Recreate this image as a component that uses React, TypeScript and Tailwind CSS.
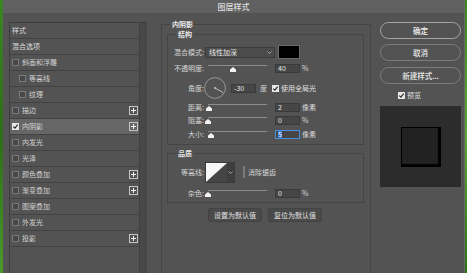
import React from "react";

/* Photoshop "图层样式" dialog — inner shadow page */

type Row = {
  label: string;
  head?: boolean;
  indent?: boolean;
  plus?: boolean;
  on?: boolean;
};

const ROWS: Row[] = [
  { label: "样式", head: true },
  { label: "混合选项", head: true },
  { label: "斜面和浮雕" },
  { label: "等高线", indent: true },
  { label: "纹理", indent: true },
  { label: "描边", plus: true },
  { label: "内阴影", plus: true, on: true },
  { label: "内发光" },
  { label: "光泽" },
  { label: "颜色叠加", plus: true },
  { label: "渐变叠加", plus: true },
  { label: "图案叠加" },
  { label: "外发光" },
  { label: "投影", plus: true },
];

function Check({ on = false }: { on?: boolean }) {
  if (on) {
    return (
      <span className="flex h-[7px] w-[7px] shrink-0 items-center justify-center bg-[#e8e8e8]">
        <svg width="7" height="7" viewBox="0 0 7 7">
          <path d="M1.3 3.6 L2.9 5.1 L5.7 1.6" fill="none" stroke="#2a2a2a" strokeWidth="1.2" />
        </svg>
      </span>
    );
  }
  return <span className="h-[7px] w-[7px] shrink-0 border border-[#7a7a7a] bg-[#474747]" />;
}

function PlusBox() {
  return (
    <span className="ml-auto mr-[1px] flex h-[9px] w-[9px] items-center justify-center border border-[#c4c4c4]">
      <svg width="5" height="5" viewBox="0 0 5 5">
        <path d="M2.5 0 V5 M0 2.5 H5" stroke="#f0f0f0" strokeWidth="1" />
      </svg>
    </span>
  );
}

function StyleList() {
  return (
    <div className="ml-[6px] mt-[9px] flex w-[138px] shrink-0 border-l border-t border-[#3e3e3e]">
      <div className="w-[130px] border-r border-[#3e3e3e]">
        {ROWS.map((r) => (
          <div
            key={r.label}
            className={
              "flex h-[16px] items-center border-b border-[#424242] " +
              (r.on ? "bg-[#666666] " : "") +
              (r.head ? "pl-[2px]" : r.indent ? "pl-[9px]" : "pl-[2px]")
            }
          >
            {!r.head && <Check on={r.on} />}
            <span className={r.head ? "text-[#dadada]" : "ml-[3px] text-[#d2d2d2]"}>{r.label}</span>
            {r.plus && <PlusBox />}
          </div>
        ))}
      </div>
      <div className="w-[7px] bg-[#484848]" />
    </div>
  );
}

function Label({ children }: { children: React.ReactNode }) {
  return <div className="w-[36px] shrink-0 text-right text-[#d6d6d6]">{children}</div>;
}

function NumBox({ value, focus = false }: { value: string; focus?: boolean }) {
  return (
    <div
      className={
        "ml-[8px] flex h-[9px] w-[25px] shrink-0 items-center pl-[2px] text-[#e8e8e8] " +
        (focus ? "border border-[#4a8ee0] bg-[#464646]" : "border border-[#3a3a3a] bg-[#464646]")
      }
    >
      {focus ? <span className="bg-[#3a76d0] text-white">{value}</span> : value}
    </div>
  );
}

function Thumb({ left }: { left: number }) {
  return (
    <svg
      className="absolute top-[4px]"
      style={{ left }}
      width="6"
      height="5"
      viewBox="0 0 6 5"
    >
      <path d="M3 0 L6 2.6 V5 H0 V2.6 Z" fill="#f2f2f2" />
    </svg>
  );
}

function Slider({ at }: { at: number }) {
  return (
    <div className="relative ml-[4px] h-full w-[59px] shrink-0">
      <div className="mt-[2px] h-[1px] bg-[#8c8c8c]" />
      <Thumb left={at - 3} />
    </div>
  );
}

function Chevron() {
  return (
    <svg width="5" height="3" viewBox="0 0 5 3">
      <path d="M0.5 0.5 L2.5 2.5 L4.5 0.5" fill="none" stroke="#bcbcbc" strokeWidth="0.8" />
    </svg>
  );
}

function SliderRow({
  label,
  at,
  value,
  unit,
  focus,
  className = "",
}: {
  label: string;
  at: number;
  value: string;
  unit: string;
  focus?: boolean;
  className?: string;
}) {
  return (
    <div className={"flex h-[10px] items-center " + className}>
      <Label>{label}</Label>
      <Slider at={at} />
      <NumBox value={value} focus={focus} />
      <span className="ml-[2px] text-[#d6d6d6]">{unit}</span>
    </div>
  );
}

function Options() {
  return (
    <fieldset className="ml-[14px] mt-[7px] h-[270px] w-[210px] shrink-0 border border-[#454545] p-0">
      <legend className="ml-[8px] px-[2px] text-[7px] font-semibold leading-[9px] text-[#ececec]">内阴影</legend>
      <div className="px-[5px] pt-[1px]">
        {/* 结构 */}
        <fieldset className="w-[197px] border border-[#454545] p-0 pb-[5px]">
          <legend className="ml-[8px] px-[2px] font-semibold leading-[9px] text-[#e6e6e6]">结构</legend>

          <div className="mt-[6px] flex h-[14px] items-center">
            <Label>混合模式:</Label>
            <div className="ml-[1px] flex h-[11px] w-[70px] items-center border border-[#3c3c3c] bg-[#4b4b4b] pl-[3px] pr-[2px] text-[#e6e6e6]">
              线性加深
              <span className="ml-auto">
                <Chevron />
              </span>
            </div>
            <div className="ml-[3px] h-[14px] w-[22px] border border-[#6a6a6a] bg-black" />
          </div>

          <SliderRow className="mt-[4px]" label="不透明度:" at={24.5} value="40" unit="%" />

          <div className="mt-[4px] flex h-[22px] items-center">
            <Label>角度:</Label>
            <svg width="22" height="22" viewBox="0 0 22 22" className="shrink-0">
              <circle cx="11" cy="11" r="10.4" fill="none" stroke="#9c9c9c" strokeWidth="0.9" />
              <path d="M11 11 L19.3 15.6" stroke="#c8c8c8" strokeWidth="0.9" />
              <circle cx="11" cy="11" r="0.9" fill="#d0d0d0" />
            </svg>
            <div className="ml-[5px] flex h-[9px] w-[25px] shrink-0 items-center border border-[#3a3a3a] bg-[#464646] pl-[2px] text-[#e8e8e8]">
              -30
            </div>
            <span className="ml-[4px] text-[#d6d6d6]">度</span>
            <span className="ml-[5px]">
              <Check on />
            </span>
            <span className="ml-[2px] whitespace-nowrap text-[#e0e0e0]">使用全局光</span>
          </div>

          <SliderRow className="mt-[3px]" label="距离:" at={1.3} value="2" unit="像素" />
          <SliderRow className="mt-[3px]" label="阻塞:" at={-0.5} value="0" unit="%" />
          <SliderRow className="mt-[4px]" label="大小:" at={3} value="5" unit="像素" focus />
        </fieldset>

        {/* 品质 */}
        <fieldset className="mt-[4px] w-[197px] border border-[#454545] p-0 pb-[4px]">
          <legend className="ml-[8px] px-[2px] font-semibold leading-[9px] text-[#e6e6e6]">品质</legend>

          <div className="mt-[4px] flex h-[21px] items-center">
            <Label>等高线:</Label>
            <div className="ml-[1px] flex h-[21px] shrink-0 border border-[#3a3a3a]">
              <svg width="21" height="19" viewBox="0 0 21 19" className="block">
                <rect width="21" height="19" fill="#454545" />
                <path d="M0 0 H21 L0 19 Z" fill="#f7f7f7" />
              </svg>
              <div className="flex w-[7px] items-center justify-center bg-[#3e3e3e]">
                <Chevron />
              </div>
            </div>
            <span className="ml-[8px]">
              <Check />
            </span>
            <span className="ml-[3px] text-[#d6d6d6]">消除锯齿</span>
          </div>

          <SliderRow className="mt-[5px]" label="杂色:" at={-0.3} value="0" unit="%" />
        </fieldset>

        <div className="mt-[5px] flex gap-[6px] pl-[41px]">
          <div className="flex h-[14px] w-[54px] items-center justify-center rounded-[2px] border border-[#434343] bg-[#4a4a4a] text-[#e2e2e2]">
            设置为默认值
          </div>
          <div className="flex h-[14px] w-[54px] items-center justify-center rounded-[2px] border border-[#434343] bg-[#4a4a4a] text-[#e2e2e2]">
            复位为默认值
          </div>
        </div>
      </div>
    </fieldset>
  );
}

function Actions() {
  return (
    <div className="ml-[9px] flex w-[81px] shrink-0 flex-col pt-[9px]">
      <div className="flex h-[17px] items-center justify-center rounded-full border border-[#a4a4a4] text-[7.5px] font-medium text-[#f2f2f2]">
        确定
      </div>
      <div className="mt-[5px] flex h-[17px] items-center justify-center rounded-full border border-[#7c7c7c] text-[7.5px] font-medium text-[#e8e8e8]">
        取消
      </div>
      <div className="mt-[6px] flex h-[17px] items-center justify-center rounded-full border border-[#7c7c7c] text-[7.5px] font-medium text-[#e8e8e8]">
        新建样式...
      </div>
      <div className="mt-[7px] flex h-[8px] items-center pl-[18px]">
        <Check on />
        <span className="ml-[2px] text-[#e0e0e0]">预览</span>
      </div>
      <div className="mt-[7px] flex h-[81px] items-center justify-center bg-[#2c2c2c]">
        <div className="h-[40px] w-[40px] border border-black bg-[#222222] shadow-[inset_-2px_-2px_1px_#000]" />
      </div>
    </div>
  );
}

export default function App() {
  return (
    <div className="flex h-[273px] w-[467px] overflow-hidden font-['Noto_Sans_CJK_SC','Noto_Sans',sans-serif] text-[7px] leading-none">
      <div className="w-[3px] shrink-0 bg-gradient-to-b from-[#3c8524] via-[#2d6e18] to-[#4a9a2c]" />
      <div className="flex w-[462px] shrink-0 flex-col border-r border-[#666666] bg-[#535353]">
        <div className="flex h-[13px] shrink-0 items-center justify-center bg-[#606060] text-[8px] font-medium text-[#dedede]">
          图层样式
        </div>
        <div className="flex min-h-0 flex-1 overflow-hidden">
          <StyleList />
          <Options />
          <Actions />
        </div>
      </div>
      <div className="w-[2px] shrink-0 bg-gradient-to-b from-[#3c8524] via-[#5aa832] to-[#2d6e18]" />
    </div>
  );
}
